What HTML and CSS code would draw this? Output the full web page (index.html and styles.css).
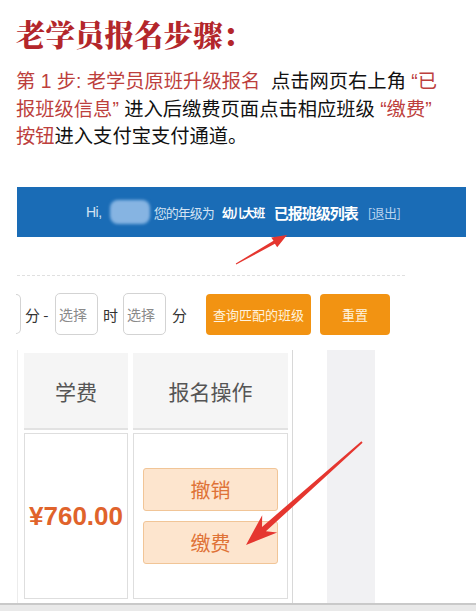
FILE: index.html
```html
<!DOCTYPE html>
<html lang="zh-CN">
<head>
<meta charset="utf-8">
<title>老学员报名步骤</title>
<link rel="stylesheet" href="styles.css">
</head>
<body>
<main class="page">
  <h1 class="title">老学员报名步骤：</h1>
  <p class="desc"><span class="red">第 1 步: 老学员原班升级报名</span>&nbsp; 点击网页右上角 <span class="red">“已<br>报班级信息”</span> 进入后缴费页面点击相应班级 <span class="red">“缴费”<br>按钮</span>进入支付宝支付通道。</p>

  <section class="shot">
    <div class="topbar">
      <span class="hi">Hi,</span>
      <span class="blur"></span>
      <span class="grade">您的年级为</span>
      <span class="klass">幼儿大班</span>
      <span class="list">已报班级列表</span>
      <span class="logout">[退出]</span>
    </div>
    <div class="dots"></div>
    <div class="filter">
      <span class="stub"></span>
      <span class="lbl lbl-a">分 -</span>
      <span class="field">选择</span>
      <span class="lbl lbl-b">时</span>
      <span class="field">选择</span>
      <span class="lbl lbl-c">分</span>
      <span class="obtn obtn-query">查询匹配的班级</span>
      <span class="obtn obtn-reset">重置</span>
    </div>
    <div class="grid-area">
      <div class="table">
        <div class="th">学费</div>
        <div class="th">报名操作</div>
        <div class="td"><span class="price">¥760.00</span></div>
        <div class="td actions">
          <span class="abtn">撤销</span>
          <span class="abtn">缴费</span>
        </div>
      </div>
      <div class="side"></div>
    </div>
  </section>
  <div class="bottombar"></div>

  <svg class="arrows" viewBox="0 0 476 611" width="476" height="611" aria-hidden="true">
    <polygon class="arrow" points="236.2,264.6 274.9,243.8 277.2,247.2 287,235 271.2,237.6 273.5,240.8 235.8,263.4"/>
    <polygon class="arrow" points="362.6,442.8 265.9,531.3 277.2,532.5 246,545 262.2,515.2 262.0,526.9 361.4,441.2"/>
  </svg>
</main>
</body>
</html>
```

FILE: styles.css
```css
* { box-sizing: border-box; }

body {
  margin: 0;
  background: #fff;
  font-family: "Noto Sans CJK SC", "Noto Sans", sans-serif;
}

.page {
  position: relative;
  width: 476px;
  height: 611px;
  overflow: hidden;
  display: flex;
  flex-direction: column;
}

.title {
  margin: 16px 0 0 16px;
  font-family: "Noto Serif CJK SC", "Noto Sans CJK SC", serif;
  font-size: 29.5px;
  line-height: 34px;
  font-weight: 900;
  color: #b3262b;
}

.desc {
  margin: 18px 0 0 16px;
  font-family: "Liberation Sans", "Noto Sans CJK SC", sans-serif;
  font-size: 19.3px;
  line-height: 27.5px;
  font-weight: 400;
  color: #111;
  white-space: nowrap;
}

.red { color: #bd3f3d; }

.shot {
  display: flex;
  flex-direction: column;
}

/* blue header bar */
.topbar {
  margin: 36.5px 10px 0 17px;
  height: 50px;
  background: #1a6cb6;
  display: flex;
  align-items: center;
  padding-left: 69px;
  color: #d3e3f3;
  white-space: nowrap;
}

.hi {
  font-family: "Liberation Sans", sans-serif;
  font-size: 14px;
  letter-spacing: -0.5px;
}

.blur {
  width: 40px;
  height: 24px;
  margin-left: 8px;
  background: #86b4e2;
  border-radius: 8px;
  filter: blur(1.5px);
}

.grade {
  margin-left: 4px;
  font-size: 13px;
  letter-spacing: -1px;
}

.klass {
  margin-left: 8px;
  font-size: 12px;
  font-weight: 700;
  color: #fff;
  letter-spacing: -1.5px;
}

.list {
  margin-left: 10px;
  font-size: 15px;
  font-weight: 700;
  color: #fff;
  letter-spacing: -1px;
}

.logout {
  margin-left: 10px;
  font-size: 13px;
  color: #b9d3ee;
  letter-spacing: -0.5px;
}

.dots {
  margin: 38px 71px 0 17px;
  height: 0;
  border-top: 1px dashed #e0e0e0;
}

/* filter row */
.filter {
  margin-top: 17px;
  height: 42px;
  display: flex;
  align-items: center;
  font-size: 15px;
  color: #333;
  white-space: nowrap;
}

.stub {
  margin-left: 16px;
  width: 5px;
  height: 40px;
  border: 1px solid #d3d3d3;
  border-left: 0;
  border-radius: 0 5px 5px 0;
}

.lbl { display: flex; align-items: center; height: 42px; }
.lbl-a { width: 34px; padding-left: 4px; }
.lbl-b { width: 25px; padding-left: 5px; }
.lbl-c { width: 40px; padding-left: 6px; }

.field {
  width: 43px;
  height: 42px;
  border: 1px solid #d3d3d3;
  border-radius: 5px;
  padding-left: 3px;
  display: flex;
  align-items: center;
  font-size: 14px;
  color: #8a8a8a;
}

.obtn {
  height: 41px;
  border-radius: 4px;
  background: #f29312;
  color: #fff3df;
  font-size: 13px;
  display: flex;
  align-items: center;
  justify-content: center;
}
.obtn-query { width: 105px; }
.obtn-reset { width: 70px; margin-left: 9px; }

/* table */
.grid-area {
  margin-top: 15px;
  height: 253px;
  display: flex;
}

.table {
  margin-left: 17px;
  width: 276px;
  border-left: 1px solid #ececec;
  border-right: 1px solid #d8d8d8;
  padding: 3px 4px 4px 6px;
  display: grid;
  grid-template-columns: 104px 155px;
  grid-template-rows: 77px 166px;
  column-gap: 5px;
  row-gap: 3px;
}

.th {
  background: #f5f5f5;
  border-bottom: 2px solid #e2e2e2;
  display: flex;
  align-items: center;
  justify-content: center;
  font-size: 21px;
  color: #555;
}

.td {
  border: 1px solid #dedede;
  background: #fff;
  display: flex;
  align-items: center;
  justify-content: center;
}

.price {
  font-family: "Liberation Sans", sans-serif;
  font-weight: 700;
  font-size: 26px;
  color: #e0632b;
}

.actions {
  flex-direction: column;
  gap: 10px;
}

.abtn {
  width: 135px;
  height: 43px;
  background: #fde5ce;
  border: 1px solid #f1c597;
  border-radius: 3px;
  color: #df7236;
  font-size: 20px;
  display: flex;
  align-items: center;
  justify-content: center;
}

.side {
  margin-left: 34px;
  width: 48px;
  background: #f1f1f3;
}

.bottombar {
  height: 8px;
  border-top: 2px solid #c9c9c9;
  background: #e9e9e9;
}

.arrows {
  position: absolute;
  top: 0;
  left: 0;
  pointer-events: none;
}

.arrow { fill: #e5362f; }
```
